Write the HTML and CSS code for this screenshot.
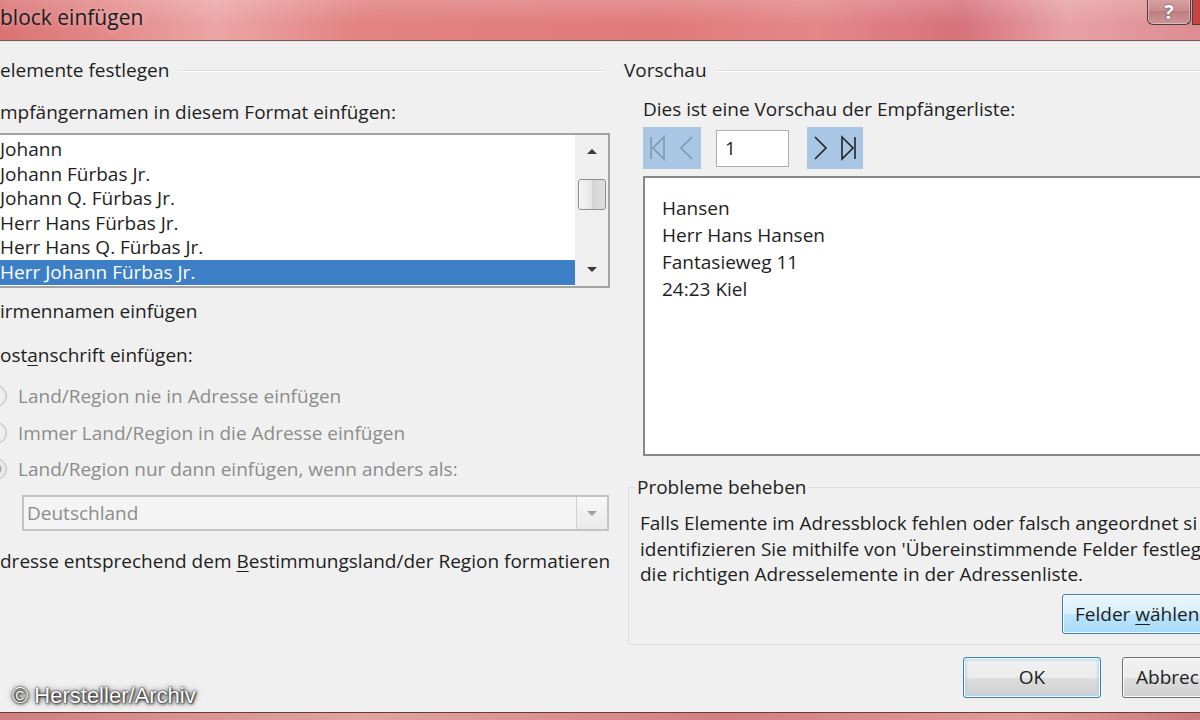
FILE: index.html
```html
<!DOCTYPE html>
<html lang="de">
<head>
<meta charset="UTF-8">
<title>Adressblock einfügen</title>
<link rel="stylesheet" href="styles.css">
</head>
<body>
<div class="titlebar">
  <span class="title">block einfügen</span>
  <div class="caption-buttons">
    <span class="help">?</span>
    <span class="close"></span>
  </div>
</div>

<div class="dialog">
  <!-- linke Seite -->
  <section class="left">
    <div class="group-head"><span>elemente festlegen</span><div class="rule"></div></div>

    <div class="line names-label">mpfängernamen in diesem Format einfügen:</div>
    <div class="listbox">
      <ul>
        <li>Johann</li>
        <li>Johann Fürbas Jr.</li>
        <li>Johann Q. Fürbas Jr.</li>
        <li>Herr Hans Fürbas Jr.</li>
        <li>Herr Hans Q. Fürbas Jr.</li>
        <li class="selected">Herr Johann Fürbas Jr.</li>
      </ul>
      <div class="scrollbar">
        <div class="sb-btn"><span class="tri-up"></span></div>
        <div class="thumb"></div>
        <div class="sb-space"></div>
        <div class="sb-btn"><span class="tri-down"></span></div>
      </div>
    </div>

    <div class="line firm-label">irmennamen einfügen</div>
    <div class="line post-label">ost<u>a</u>nschrift einfügen:</div>

    <div class="radio r1"><span class="dot"></span><span>Land/Region nie in Adresse einfügen</span></div>
    <div class="radio r2"><span class="dot"></span><span>Immer Land/Region in die Adresse einfügen</span></div>
    <div class="radio r3 checked"><span class="dot"></span><span>Land/Region nur dann einfügen, wenn anders als:</span></div>

    <div class="combo">
      <span class="combo-text">Deutschland</span>
      <span class="drop"><span class="tri-down gray"></span></span>
    </div>

    <div class="line format-label">dresse entsprechend dem <u>B</u>estimmungsland/der Region formatieren</div>
  </section>

  <!-- rechte Seite -->
  <section class="right">
    <div class="group-head"><span>Vorschau</span><div class="rule"></div></div>
    <div class="line preview-label">Dies ist eine Vorschau der Empfängerliste:</div>

    <div class="nav">
      <div class="nav-btns">
        <svg width="58" height="42" viewBox="0 0 58 42">
          <g fill="none" stroke="#8197ad" stroke-width="1.6">
            <line x1="8" y1="10" x2="8" y2="32"/>
            <polygon points="21,10 10,21 21,32"/>
            <polyline points="49,10 38,21 49,32"/>
          </g>
        </svg>
      </div>
      <span class="recno">1</span>
      <div class="nav-btns">
        <svg width="56" height="42" viewBox="0 0 56 42">
          <g fill="none" stroke="#222" stroke-width="1.6">
            <polyline points="8,10 19,21 8,32"/>
            <polygon points="35,10 46,21 35,32"/>
            <line x1="48" y1="10" x2="48" y2="32"/>
          </g>
        </svg>
      </div>
    </div>

    <div class="preview">
      <div>Hansen</div>
      <div>Herr Hans Hansen</div>
      <div>Fantasieweg 11</div>
      <div>24:23 Kiel</div>
    </div>

    <fieldset class="problems">
      <legend>Probleme beheben</legend>
      <p>Falls Elemente im Adressblock fehlen oder falsch angeordnet si<br>
      identifizieren Sie mithilfe von 'Übereinstimmende Felder festleg<br>
      die richtigen Adresselemente in der Adressenliste.</p>
      <div class="btn hot fields-btn"><span>Felder <u>w</u>ählen</span></div>
    </fieldset>

    <div class="actions">
      <div class="btn default">OK</div>
      <div class="btn cancel">Abbrec</div>
    </div>
  </section>
</div>

<div class="frame-bottom"></div>
<div class="watermark">© Hersteller/Archiv</div>
</body>
</html>
```

FILE: styles.css
```css
html, body {
  margin: 0;
}
body {
  position: relative;
  width: 1200px;
  height: 720px;
  overflow: hidden;
  background: #f0f0f0;
  font-family: "Open Sans", "Noto Sans", sans-serif;
  font-size: 19px;
  color: #1e1e1e;
}
u {
  text-underline-offset: 3px;
}

/* Fensterrahmen */
.titlebar {
  height: 40px;
  display: flex;
  justify-content: space-between;
  align-items: flex-start;
  background:
    linear-gradient(180deg, rgba(255,255,255,0.16), rgba(255,255,255,0) 60%),
    linear-gradient(90deg, #d97273 0%, #e48d8d 10%, #eba6a5 18%, #e28282 30%, #e07b7c 55%, #e48789 68%, #d6727a 80%, #e8a2a6 89%, #dc8c92 100%);
  border-bottom: 1px solid #6f5c5c;
}
.title {
  font-size: 21px;
  line-height: 34px;
  color: #1c1c1c;
  text-shadow: 0 0 6px rgba(255,255,255,0.45);
  white-space: nowrap;
}
.caption-buttons {
  display: flex;
  margin-top: -3px;
}
.help {
  width: 42px;
  height: 27px;
  border: 1px solid #4e3d3f;
  border-top: none;
  border-radius: 0 0 6px 6px;
  background: linear-gradient(#dba4a5, #c98d8f 50%, #bb7c7f 51%, #cb9799);
  box-shadow: inset 0 0 0 1px rgba(255,255,255,0.35);
  color: #fff;
  font-weight: bold;
  font-size: 20px;
  line-height: 30px;
  text-align: center;
  text-shadow: 0 0 2px #333;
}
.close {
  width: 7px;
  height: 27px;
  margin-left: 1px;
  border: 1px solid #4e3d3f;
  border-top: none;
  border-right: none;
  background: #c8443f;
}
.frame-bottom {
  position: absolute;
  left: 0;
  right: 0;
  bottom: 0;
  height: 7px;
  border-top: 1px solid #6b3b3b;
  background: linear-gradient(90deg, #cf7f80, #e2a3a3 30%, #d37f82 60%, #e09a9c 85%, #cc7a7e);
}
.watermark {
  position: absolute;
  left: 12px;
  top: 683px;
  font-family: "Liberation Sans", Arial, sans-serif;
  font-size: 22px;
  color: #fff;
  text-shadow: 0 0 2px #000, 1px 1px 3px #222, 0 0 6px #444;
}

/* Dialog */
.dialog {
  display: flex;
  height: 668px;
  box-sizing: border-box;
  padding-top: 15px;
  border-top: 1px solid #f1e2e2;
}
.left {
  width: 610px;
  flex: none;
}
.right {
  width: 600px;
  flex: none;
  margin-left: 14px;
}
.group-head {
  display: flex;
  align-items: center;
  height: 26px;
  line-height: 26px;
  white-space: nowrap;
}
.group-head .rule {
  flex: 1;
  margin-left: 9px;
  border-top: 1px solid #d5dfe5;
  box-shadow: 0 1px 0 #fff;
}
.left .group-head {
  margin-right: 5px;
}
.line {
  line-height: 26px;
  white-space: nowrap;
}
.names-label {
  margin-top: 16px;
}
.firm-label {
  margin-top: 10px;
}
.post-label {
  margin-top: 18px;
}
.format-label {
  margin-top: 17px;
}

/* Liste */
.listbox {
  display: flex;
  width: 630px;
  height: 155px;
  margin: 8px 0 0 -20px;
  box-sizing: border-box;
  border: 2px solid #a3a3a3;
  background: #fff;
}
.listbox ul {
  flex: 1;
  list-style: none;
  margin: 0;
  padding: 2px 0 0;
}
.listbox li {
  padding-left: 18px;
  line-height: 24.6px;
  white-space: nowrap;
}
.listbox li.selected {
  background: #3d7fc6;
  color: #fff;
}
.scrollbar {
  width: 33px;
  display: flex;
  flex-direction: column;
  align-items: center;
  background: #efefef;
}
.sb-btn {
  height: 33px;
  display: flex;
  align-items: center;
  justify-content: center;
}
.sb-space {
  flex: 1;
}
.thumb {
  width: 28px;
  height: 31px;
  margin-top: 11px;
  box-sizing: border-box;
  border: 1px solid #8f8f8f;
  border-radius: 3px;
  background: linear-gradient(90deg, #f6f6f6, #e4e4e4 50%, #d4d4d4 51%, #dedede);
}
.tri-up {
  width: 0;
  height: 0;
  border-left: 5px solid transparent;
  border-right: 5px solid transparent;
  border-bottom: 5px solid #3a3a3a;
}
.tri-down {
  width: 0;
  height: 0;
  border-left: 5px solid transparent;
  border-right: 5px solid transparent;
  border-top: 5px solid #3a3a3a;
}
.tri-down.gray {
  border-top-color: #a0a0a0;
}

/* Optionen */
.radio {
  display: flex;
  align-items: center;
  margin-left: -15px;
  line-height: 26px;
  color: #8c8c8c;
  white-space: nowrap;
}
.radio .dot {
  flex: none;
  width: 22px;
  height: 22px;
  margin-right: 11px;
  box-sizing: border-box;
  border: 1px solid #bdbdbd;
  border-radius: 50%;
  background: radial-gradient(circle, #f9f9f9, #e2e2e2);
}
.radio.checked .dot {
  background: radial-gradient(circle, #a6a6a6 0 5px, #ececec 6px, #e2e2e2);
}
.r1 { margin-top: 15px; }
.r2 { margin-top: 11px; }
.r3 { margin-top: 10px; }
.combo {
  display: flex;
  width: 587px;
  height: 36px;
  margin: 13px 0 0 22px;
  box-sizing: border-box;
  border: 2px solid #c4c4c4;
  background: #f4f4f4;
  color: #8c8c8c;
}
.combo-text {
  flex: 1;
  padding-left: 3px;
  line-height: 32px;
}
.drop {
  width: 30px;
  display: flex;
  align-items: center;
  justify-content: center;
  border-left: 1px solid #d0d0d0;
  background: linear-gradient(#f8f8f8, #e9e9e9);
}

/* Vorschau */
.preview-label {
  margin: 13px 0 0 19px;
}
.nav {
  display: flex;
  align-items: center;
  height: 42px;
  margin: 5px 0 0 19px;
}
.nav-btns {
  height: 42px;
  background: #a9c7e5;
}
.nav-btns svg {
  display: block;
}
.recno {
  width: 73px;
  height: 37px;
  margin: 0 18px 0 15px;
  box-sizing: border-box;
  padding-left: 8px;
  border: 1px solid #a9afb7;
  background: #fff;
  line-height: 35px;
}
.preview {
  width: 580px;
  height: 280px;
  margin: 7px 0 0 19px;
  box-sizing: border-box;
  padding: 17px 0 0 17px;
  border: 2px solid #878787;
  background: #fff;
  line-height: 27px;
}

/* Probleme beheben */
.problems {
  width: 600px;
  margin: 18px 0 0 4px;
  padding: 0 0 10px 6px;
  border: 1px solid #d5dfe5;
  border-radius: 3px;
}
.problems legend {
  padding: 0 2px;
  line-height: 26px;
}
.problems p {
  margin: 11px 0 0 5px;
  line-height: 25.5px;
  white-space: nowrap;
}
.btn {
  flex: none;
  width: 138px;
  height: 41px;
  box-sizing: border-box;
  display: flex;
  align-items: center;
  justify-content: center;
  border: 1px solid #707070;
  border-radius: 3px;
  background: linear-gradient(#f2f2f2, #ebebeb 50%, #dddddd 51%, #cfcfcf);
  box-shadow: inset 0 0 0 1px #fbfbfb;
  white-space: nowrap;
}
.btn.default {
  border-color: #3c7fb1;
  box-shadow: inset 0 0 0 1px #fbfbfb, inset 0 0 3px 2px #a6d8f3;
}
.btn.hot {
  border-color: #3c7fb1;
  background: linear-gradient(#eaf6fd, #d9f0fc 50%, #bee6fd 51%, #a7d9f5);
}
.fields-btn {
  width: 150px;
  height: 40px;
  margin: 6px 0 0 427px;
  justify-content: flex-start;
  padding-left: 12px;
}
.actions {
  display: flex;
  gap: 21px;
  margin: 12px 0 0 339px;
}
.btn.cancel {
  justify-content: flex-start;
  padding-left: 13px;
}
```
